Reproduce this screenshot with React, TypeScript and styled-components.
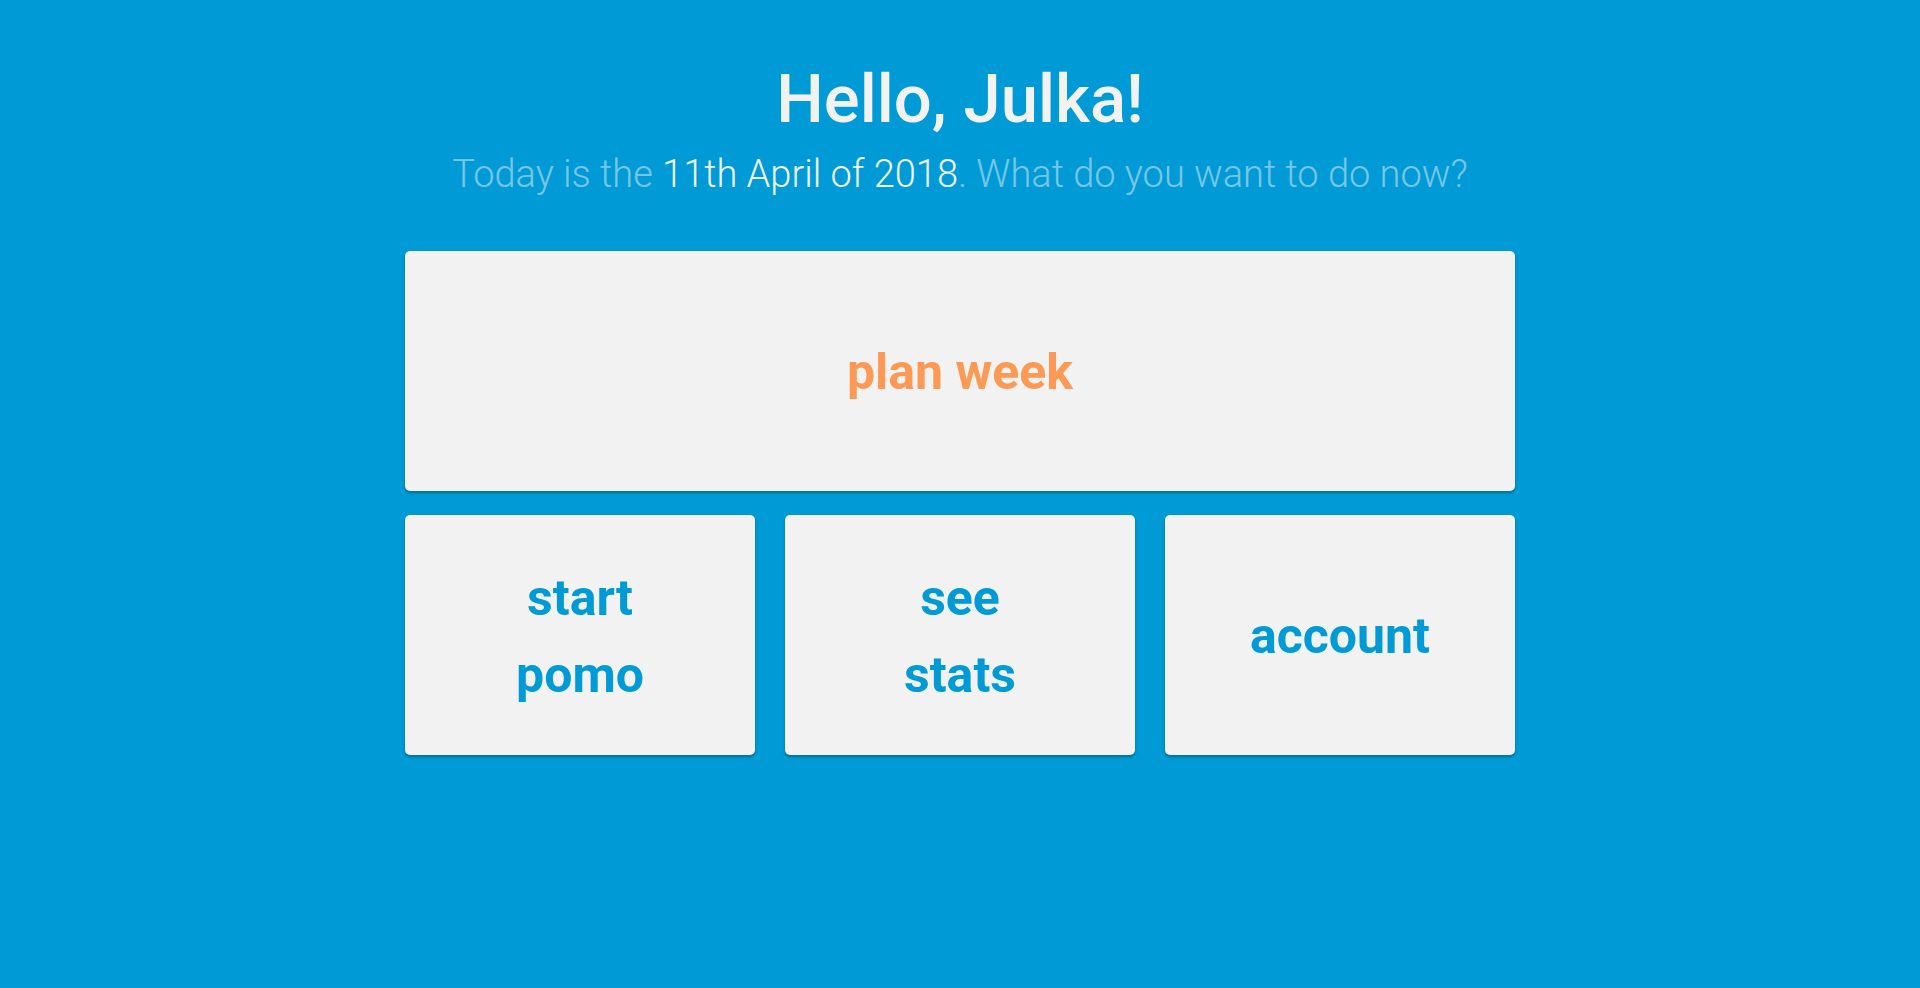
import React from "react";
import styled, { createGlobalStyle } from "styled-components";

const Global = createGlobalStyle`
  html, body { margin: 0; padding: 0; }
  body {
    background: #009bd6;
    font-family: Roboto, "Noto Sans", Arial, sans-serif;
    min-height: 988px;
  }
`;

const Page = styled.main`
  display: flex;
  flex-direction: column;
  align-items: center;
  padding-top: 59px;
`;

const Title = styled.h1`
  margin: 0;
  font-size: 67px;
  line-height: 1.2;
  font-weight: 500;
  color: #f2f2f2;
`;

const Subtitle = styled.p`
  margin: 13px 0 0;
  font-size: 38px;
  line-height: 1.2;
  font-weight: 300;
  color: rgba(242, 242, 242, 0.5);
`;

const Highlight = styled.span`
  color: #f2f2f2;
`;

const Grid = styled.div`
  margin-top: 53px;
  width: 1110px;
  display: grid;
  grid-template-columns: repeat(3, 350px);
  column-gap: 30px;
  row-gap: 24px;
`;

const Tile = styled.button<{ $wide?: boolean; $accent?: boolean }>`
  grid-column: ${(p) => (p.$wide ? "1 / -1" : "auto")};
  height: 240px;
  border: none;
  border-radius: 5px;
  background: #f2f2f2;
  box-shadow: 0 2px 3px rgba(0, 0, 0, 0.3);
  display: flex;
  align-items: center;
  justify-content: center;
  padding: 4px 90px 0;
  font-family: Roboto, "Noto Sans", Arial, sans-serif;
  font-size: 50px;
  line-height: 77px;
  font-weight: 700;
  color: ${(p) => (p.$accent ? "#fc9a55" : "#009bd6")};
  cursor: pointer;
`;

export default function App() {
  return (
    <>
      <Global />
      <Page>
        <Title>Hello, Julka!</Title>
        <Subtitle>
          Today is the <Highlight>11th April of 2018</Highlight>. What do you want to do now?
        </Subtitle>
        <Grid>
          <Tile $wide $accent>plan week</Tile>
          <Tile>start pomo</Tile>
          <Tile>see stats</Tile>
          <Tile>account</Tile>
        </Grid>
      </Page>
    </>
  );
}
